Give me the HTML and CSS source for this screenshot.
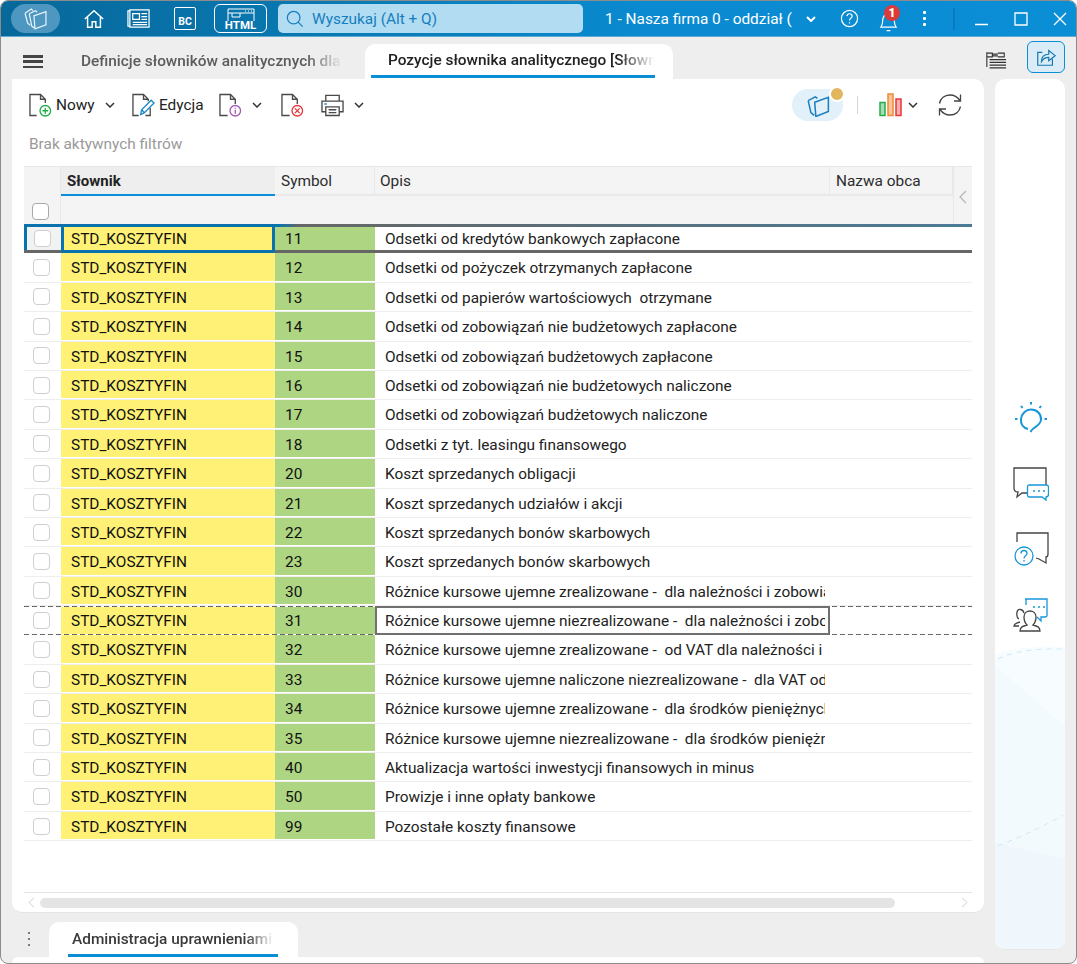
FILE: index.html
```html
<!DOCTYPE html>
<html lang="pl">
<head>
<meta charset="utf-8">
<title>Pozycje słownika analitycznego</title>
<link rel="stylesheet" href="styles.css">
</head>
<body>
<div class="window">
  <header class="titlebar">
    <div class="logo-pill">
      <svg class="ic-logo" viewBox="0 0 22 22"><path d="M9.500 8.500 21 4.500V17L10.500 21Z"/><path d="M5 6.500 11 3.500 12.500 5M5 6.500 7.500 18.500 10 20"/><path d="M1 6 7 2 8.500 3.500M1 6 3.500 15.500 6 17.500"/></svg>
    </div>
    <svg class="ic-home" viewBox="0 0 24 24"><path d="M2 12 12 3 22 12M5 10V21H10V15H14V21H19V10"/></svg>
    <svg class="ic-news" viewBox="0 0 24 24"><path d="M1 4H3V20H1ZM3 3H23V21H3Z"/><path d="M6 7H13V13H6ZM15 7H21M15 10H21M15 13H21M6 16H21M6 18.500H21"/></svg>
    <div class="bc-box"><span class="bc-text">BC</span></div>
    <div class="html-box">
      <svg class="ic-html" viewBox="0 0 30 14"><path d="M2 13V1H28V13M2 5H28M6 5V9H14V5M19 3H20M22 3H23M25 3H26"/></svg>
      <span class="html-text">HTML</span>
    </div>
    <div class="search">
      <svg class="ic-search" viewBox="0 0 20 20"><circle cx="8.500" cy="8.500" r="7"/><path d="M13.500 13.500 18.500 18.500"/></svg>
      <span>Wyszukaj (Alt + Q)</span>
    </div>
    <span class="company">1 - Nasza firma 0 - oddział (</span>
    <svg class="ic-chev-white" viewBox="0 0 10 6"><path d="M1 1 5 5 9 1"/></svg>
    <svg class="ic-help" viewBox="0 0 20 20"><circle cx="10" cy="10" r="8.500"/><path d="M7.300 7.500C7.500 5.800 8.700 5 10 5 11.700 5 12.800 6.100 12.800 7.500 12.800 9.500 10 9.500 10 12"/><path d="M10 14V15.200"/></svg>
    <div class="bell-wrap">
      <svg class="ic-bell" viewBox="0 0 20 24"><path d="M2 18C3.500 16 4 14 4 10 4 7 6.500 4 10 4S16 7 16 10C16 14 16.500 16 18 18ZM8 21.500H12"/></svg>
      <span class="badge">1</span>
    </div>
    <div class="kebab light"><i></i><i></i><i></i></div>
    <span class="tb-sep"></span>
    <svg class="ic-win" viewBox="0 0 14 14"><path d="M0 12.500H13"/></svg>
    <svg class="ic-win win-gap" viewBox="0 0 14 14"><path d="M1 1H13V13H1Z"/></svg>
    <svg class="ic-win win-gap" viewBox="0 0 14 14"><path d="M1 1 13 13M13 1 1 13"/></svg>
  </header>

  <nav class="tabbar">
    <div class="hamburger"><i></i><i></i><i></i></div>
    <div class="tab tab-inactive"><span class="tab-label fade">Definicje słowników analitycznych dla</span></div>
    <div class="tab tab-active"><span class="tab-label fade">Pozycje słownika analitycznego [Słown</span></div>
    <svg class="ic-tree" viewBox="0 0 24 20"><path d="M2 1V17M2 2H8V6H2M8 3H14M8 5H14M14 2H21V6H14M5 9H23M5 12H23M5 15H23M5 18H23"/></svg>
    <div class="share-btn">
      <svg class="ic-share" viewBox="0 0 24 24"><path d="M19 14V21H3V7H8"/><path d="M7 17C7 11 11 9 15 9V5L22 10.500 15 16V12.500C12 12.500 9 13.500 7 17Z"/></svg>
    </div>
  </nav>

  <div class="workspace">
    <div class="content">
      <main class="card">
        <div class="toolbar">
          <svg class="ic-doc" viewBox="0 0 24 24"><path class="d" d="M8 23H1V1H12L17 6V10M12 1V6H17"/><circle class="g" cx="17" cy="18" r="5.500"/><path class="g" d="M17 15V21M14 18H20"/></svg>
          <span class="tool-label lb-new">Nowy</span>
          <svg class="ic-chev chev-new" viewBox="0 0 10 6"><path d="M1 1 5 5 9 1"/></svg>
          <svg class="ic-doc doc-edit" viewBox="0 0 24 24"><path class="d" d="M7 23H1V1H12L17 6V8M12 1V6H17M19 15V23H14"/><path class="b" d="M9 22 10 17 20 7 23 10 13 20Z M10 17 13 20"/></svg>
          <span class="tool-label lb-edit">Edycja</span>
          <svg class="ic-doc doc-info" viewBox="0 0 24 24"><path class="d" d="M9 23H1V1H12L17 6V11M12 1V6H17"/><circle class="p" cx="17" cy="18" r="5.500"/><path class="p" d="M17 17V21M17 14.800V15.800"/></svg>
          <svg class="ic-chev chev-info" viewBox="0 0 10 6"><path d="M1 1 5 5 9 1"/></svg>
          <svg class="ic-doc doc-del" viewBox="0 0 24 24"><path class="d" d="M9 23H1V1H12L17 6V11M12 1V6H17"/><circle class="r" cx="17" cy="18" r="5.500"/><path class="r" d="M14.500 15.500 19.500 20.500M19.500 15.500 14.500 20.500"/></svg>
          <svg class="ic-doc doc-print" viewBox="0 0 24 24"><path class="d" d="M5 8V2H19V8M5 19H1V8H23V19H19M5 14H19V23H5ZM8 17H16M8 20H16"/><path class="b" d="M3.500 11H6"/></svg>
          <svg class="ic-chev chev-print" viewBox="0 0 10 6"><path d="M1 1 5 5 9 1"/></svg>
          <div class="tool-spacer"></div>
          <div class="view-pill">
            <svg class="ic-view" viewBox="0 0 22 22"><path d="M8 8.500 20.500 4V17L9 21.500Z"/><path d="M2 7 8.500 3.500 10.500 5M2 7 4.500 18 7.500 20.500"/></svg>
            <span class="view-dot"></span>
          </div>
          <span class="tool-sep"></span>
          <svg class="ic-bars" viewBox="0 0 24 24"><rect class="bg" x="1" y="9.500" width="5" height="13"/><rect class="bo" x="9" y="1" width="5" height="21.500"/><rect class="br" x="17" y="6" width="5" height="16.500"/></svg>
          <svg class="ic-chev chev-bars" viewBox="0 0 10 6"><path d="M1 1 5 5 9 1"/></svg>
          <svg class="ic-refresh" viewBox="0 0 24 24"><path d="M1.500 10.500C2.500 5.500 6.500 2 12 2 16 2 19.500 4 22 7.500M22.500 1.500V8H16"/><path d="M22.500 13.500C21.500 18.500 17.500 22 12 22 8 22 4.500 20 2 16.500M1.500 22.500V16H8"/></svg>
        </div>
        <div class="filters">Brak aktywnych filtrów</div>

        <div class="grid">
          <div class="head">
            <div class="h-check"><span class="cb cb-head"></span></div>
            <div class="h-cell h-sort">Słownik</div>
            <div class="h-cell">Symbol</div>
            <div class="h-cell h-opis">Opis</div>
            <div class="h-cell h-obca">Nazwa obca</div>
            <div class="h-arrow"><svg class="ic-arrow" viewBox="0 0 8 14"><path d="M7 1 1 7 7 13"/></svg></div>
            <div class="h-filter"></div>
          </div>
          <div class="rows">
            <div class="row row-current"><div class="c-check"><span class="cb"></span></div><div class="c-dict c-focus">STD_KOSZTYFIN</div><div class="c-sym">11</div><div class="c-opis">Odsetki od kredytów bankowych zapłacone</div></div>
            <div class="row"><div class="c-check"><span class="cb"></span></div><div class="c-dict">STD_KOSZTYFIN</div><div class="c-sym">12</div><div class="c-opis">Odsetki od pożyczek otrzymanych zapłacone</div></div>
            <div class="row"><div class="c-check"><span class="cb"></span></div><div class="c-dict">STD_KOSZTYFIN</div><div class="c-sym">13</div><div class="c-opis">Odsetki od papierów wartościowych  otrzymane</div></div>
            <div class="row"><div class="c-check"><span class="cb"></span></div><div class="c-dict">STD_KOSZTYFIN</div><div class="c-sym">14</div><div class="c-opis">Odsetki od zobowiązań nie budżetowych zapłacone</div></div>
            <div class="row"><div class="c-check"><span class="cb"></span></div><div class="c-dict">STD_KOSZTYFIN</div><div class="c-sym">15</div><div class="c-opis">Odsetki od zobowiązań budżetowych zapłacone</div></div>
            <div class="row"><div class="c-check"><span class="cb"></span></div><div class="c-dict">STD_KOSZTYFIN</div><div class="c-sym">16</div><div class="c-opis">Odsetki od zobowiązań nie budżetowych naliczone</div></div>
            <div class="row"><div class="c-check"><span class="cb"></span></div><div class="c-dict">STD_KOSZTYFIN</div><div class="c-sym">17</div><div class="c-opis">Odsetki od zobowiązań budżetowych naliczone</div></div>
            <div class="row"><div class="c-check"><span class="cb"></span></div><div class="c-dict">STD_KOSZTYFIN</div><div class="c-sym">18</div><div class="c-opis">Odsetki z tyt. leasingu finansowego</div></div>
            <div class="row"><div class="c-check"><span class="cb"></span></div><div class="c-dict">STD_KOSZTYFIN</div><div class="c-sym">20</div><div class="c-opis">Koszt sprzedanych obligacji</div></div>
            <div class="row"><div class="c-check"><span class="cb"></span></div><div class="c-dict">STD_KOSZTYFIN</div><div class="c-sym">21</div><div class="c-opis">Koszt sprzedanych udziałów i akcji</div></div>
            <div class="row"><div class="c-check"><span class="cb"></span></div><div class="c-dict">STD_KOSZTYFIN</div><div class="c-sym">22</div><div class="c-opis">Koszt sprzedanych bonów skarbowych</div></div>
            <div class="row"><div class="c-check"><span class="cb"></span></div><div class="c-dict">STD_KOSZTYFIN</div><div class="c-sym">23</div><div class="c-opis">Koszt sprzedanych bonów skarbowych</div></div>
            <div class="row"><div class="c-check"><span class="cb"></span></div><div class="c-dict">STD_KOSZTYFIN</div><div class="c-sym">30</div><div class="c-opis">Różnice kursowe ujemne zrealizowane -  dla należności i zobowiązań</div></div>
            <div class="row row-dashed"><div class="c-check"><span class="cb"></span></div><div class="c-dict">STD_KOSZTYFIN</div><div class="c-sym">31</div><div class="c-opis c-outline">Różnice kursowe ujemne niezrealizowane -  dla należności i zobowiązań</div></div>
            <div class="row"><div class="c-check"><span class="cb"></span></div><div class="c-dict">STD_KOSZTYFIN</div><div class="c-sym">32</div><div class="c-opis">Różnice kursowe ujemne zrealizowane -  od VAT dla należności i zobowiązań</div></div>
            <div class="row"><div class="c-check"><span class="cb"></span></div><div class="c-dict">STD_KOSZTYFIN</div><div class="c-sym">33</div><div class="c-opis">Różnice kursowe ujemne naliczone niezrealizowane -  dla VAT od należności</div></div>
            <div class="row"><div class="c-check"><span class="cb"></span></div><div class="c-dict">STD_KOSZTYFIN</div><div class="c-sym">34</div><div class="c-opis">Różnice kursowe ujemne zrealizowane -  dla środków pieniężnych</div></div>
            <div class="row"><div class="c-check"><span class="cb"></span></div><div class="c-dict">STD_KOSZTYFIN</div><div class="c-sym">35</div><div class="c-opis">Różnice kursowe ujemne niezrealizowane -  dla środków pieniężnych</div></div>
            <div class="row"><div class="c-check"><span class="cb"></span></div><div class="c-dict">STD_KOSZTYFIN</div><div class="c-sym">40</div><div class="c-opis">Aktualizacja wartości inwestycji finansowych in minus</div></div>
            <div class="row"><div class="c-check"><span class="cb"></span></div><div class="c-dict">STD_KOSZTYFIN</div><div class="c-sym">50</div><div class="c-opis">Prowizje i inne opłaty bankowe</div></div>
            <div class="row"><div class="c-check"><span class="cb"></span></div><div class="c-dict">STD_KOSZTYFIN</div><div class="c-sym">99</div><div class="c-opis">Pozostałe koszty finansowe</div></div>
          </div>
          <div class="hscroll">
            <svg class="ic-sarrow" viewBox="0 0 8 14"><path d="M7 1 1 7 7 13"/></svg>
            <div class="thumb"></div>
            <svg class="ic-sarrow" viewBox="0 0 8 14"><path d="M1 1 7 7 1 13"/></svg>
          </div>
        </div>
      </main>
      <div class="bottom-tabs">
        <div class="kebab dark"><i></i><i></i><i></i></div>
        <div class="bottom-tab"><span class="tab-label fade">Administracja uprawnieniami</span></div>
      </div>
      <div class="lower-card"></div>
    </div>

    <aside class="sidebar">
      <svg class="ic-side" viewBox="0 0 36 36"><g class="blue"><path d="M15 29C10 28 7.500 24 8 19 8.500 13.500 13 9.500 18 9.500 24 9.500 28.500 14 28 20 27.500 24 24 26 21 28 19.500 29 18.500 30 17.500 32"/><path d="M18 2V4.500M8 6 9.500 8M28 6 26.500 8M2 19H4.500M31.500 19H34"/></g></svg>
      <svg class="ic-side" viewBox="0 0 36 36"><path class="dk" d="M33 20V3H1V23C1 26 2 27 5 27L4 32 9 28H14"/><path class="blue-s" d="M16 20H33C35 20 35.500 21 35.500 22V29C35.500 31 35 32 33 32V35L29 32H16C15 32 14.500 31 14.500 30V22C14.500 21 15 20 16 20ZM20 26H22M25 26H27M30 26H32"/></svg>
      <svg class="ic-side" viewBox="0 0 36 36"><path class="dk" d="M4 12V3H35V24C35 26 34 27 33 27V33L26 29 23 28"/><circle class="blue-s" cx="11" cy="26" r="9"/><path class="blue-s" d="M8 23.500C8 21.500 9.500 20.500 11 20.500 13 20.500 14 22 14 23.500 14 25.500 11 25.500 11 28.500M11 30V31.500"/></svg>
      <svg class="ic-side ic-people" viewBox="0 0 36 36"><path class="blue-s" d="M12 3H34V19C34 20 33 21 32 21H28V25L24 21M13 9V3M20 11H22M25 11H27M30 11H32"/><path class="dk" d="M7 26C3 27 1 28 1 30H6M11 17C10 13 5 12 4 16 3.500 19 4 22 6 23"/><path class="dk" d="M7 35C7 31 10 30 14 29 12 27 11 24 11 21 11 17 14 15 17 15S23 17 23 21C23 24 22 27 20 29 24 30 27 31 27 35Z"/></svg>
      <svg class="side-wave" viewBox="0 0 70 300" preserveAspectRatio="none">
        <path class="w1" d="M0 10C15 3 40 0 70 2V300H0Z"/>
        <path class="w2" d="M0 22C20 35 45 60 70 80V300H0Z"/>
        <path class="w3" d="M0 195 70 212V300H0Z"/>
        <path class="dash" d="M3 14C15 7 40 3 68 4"/>
        <path class="dash" d="M3 198C25 190 50 178 68 168"/>
      </svg>
    </aside>
  </div>
</div>
</body>
</html>
```

FILE: styles.css
```css
* { box-sizing: border-box; }
html, body { margin: 0; padding: 0; background: #fff; }
body { font-family: Roboto, "Liberation Sans", sans-serif; color: #222; width: 1077px; height: 964px; overflow: hidden; }
svg { display: block; flex: none; fill: none; }

.window { width: 1077px; height: 964px; background: #eee; border: 1px solid #8c8c8c; border-radius: 8px; display: flex; flex-direction: column; overflow: hidden; }

/* title bar */
.titlebar { height: 36px; flex: none; display: flex; align-items: center; padding-left: 10px; background: linear-gradient(90deg, #07689a 0, #0a7fbb 40%, #0a8ad0 60%, #0a8ed6 100%); border-bottom: 1px solid #5fa9d3; }
.titlebar svg { stroke: #fff; }
.logo-pill { width: 49px; height: 29px; border-radius: 15px; background: #4e97c1; display: flex; align-items: center; justify-content: center; }
.ic-logo { width: 23px; height: 23px; stroke-width: 1.200; }
.titlebar .ic-logo { stroke: #e4f2fa; }
.ic-home { width: 22px; height: 22px; margin-left: 23px; stroke-width: 1.600; }
.ic-news { width: 23px; height: 23px; margin-left: 22px; stroke-width: 1.300; }
.bc-box { width: 22px; height: 23px; margin-left: 24px; border: 1.500px solid #fff; border-radius: 2px; display: flex; align-items: flex-end; justify-content: center; }
.bc-text { font-size: 10.500px; font-weight: 700; color: #fff; line-height: 15px; }
.html-box { width: 53px; height: 29px; margin-left: 18px; border: 1.500px solid #fff; border-radius: 6px; position: relative; display: flex; flex-direction: column; align-items: center; }
.ic-html { width: 30px; height: 14px; margin-top: 3px; stroke-width: 1; }
.html-text { font-size: 11.500px; font-weight: 700; color: #fff; line-height: 10px; margin-top: -2px; }
.search { width: 305px; height: 29px; margin-left: 11px; background: #b2dcf2; border-radius: 5px; display: flex; align-items: center; padding-left: 8px; gap: 8px; font-size: 15.400px; color: #157fbd; }
.titlebar .ic-search { width: 18px; height: 18px; stroke: #157fbd; stroke-width: 1.400; }
.company { width: 187px; margin-left: 22px; color: #fff; font-size: 15.400px; white-space: nowrap; overflow: hidden; }
.ic-chev-white { width: 10px; height: 6px; margin-left: 14px; stroke-width: 2; }
.ic-help { width: 19px; height: 19px; margin-left: 24px; stroke-width: 1.300; }
.bell-wrap { width: 22px; height: 28px; margin-left: 19px; position: relative; }
.ic-bell { width: 19px; height: 23px; margin: 5px 0 0 1px; stroke-width: 1.300; }
.badge { position: absolute; left: 6px; top: 0; width: 16px; height: 16px; border-radius: 50%; background: #d93a3a; color: #fff; font-size: 12px; font-weight: 900; line-height: 16px; text-align: center; }
.kebab { display: flex; flex-direction: column; gap: 3px; width: 3px; }
.kebab i { display: block; width: 3px; height: 3px; background: #fff; border-radius: 1px; }
.kebab.light { margin-left: 23px; }
.kebab.dark { margin-left: 16px; gap: 4px; flex: none; }
.kebab.dark i { background: #555; width: 2px; height: 2px; }
.tb-sep { width: 2px; height: 22px; margin-left: 27px; background: rgba(0,70,120,.25); }
.ic-win { width: 14px; height: 14px; margin-left: 20px; stroke-width: 1.300; }
.win-gap { margin-left: 25px; }

/* tab bar */
.tabbar { height: 42px; flex: none; display: flex; align-items: flex-end; padding-left: 22px; position: relative; }
.hamburger { width: 20px; height: 13px; margin-bottom: 11px; display: flex; flex-direction: column; justify-content: space-between; flex: none; }
.hamburger i { display: block; height: 2.500px; background: #444; }
.tab { flex: none; font-size: 15.400px; font-weight: 500; white-space: nowrap; }
.tab-label { display: block; overflow: hidden; }
.fade { -webkit-mask-image: linear-gradient(90deg, #000 86%, transparent 100%); mask-image: linear-gradient(90deg, #000 86%, transparent 100%); }
.tab-inactive { width: 262px; margin-left: 38px; margin-bottom: 9px; color: #5c5c5c; }
.tab-active { width: 308px; height: 35px; margin-left: 22px; background: #fff; border-radius: 10px 10px 0 0; padding: 7px 18px 0 23px; color: #222; position: relative; }
.tab-active::after { content: ""; position: absolute; left: 6px; right: 18px; bottom: 1px; height: 3px; background: #0a8ed6; }
.ic-tree { width: 22px; height: 19px; margin-left: 312px; margin-bottom: 9px; stroke: #333; stroke-width: 1.200; }
.share-btn { width: 38px; height: 32px; margin-left: 20px; margin-bottom: 6px; border: 1px solid #0a8ed6; border-radius: 6px; background: #d9ecf7; display: flex; align-items: center; justify-content: center; flex: none; }
.ic-share { width: 22px; height: 22px; stroke: #1577ad; stroke-width: 1.300; }

/* workspace */
.workspace { flex: 1; min-height: 0; display: flex; padding-left: 11px; }
.content { width: 972px; display: flex; flex-direction: column; flex: none; }
.card { height: 834px; flex: none; background: #fff; border-radius: 0 10px 10px 10px; border-bottom: 1px solid #e4e4e4; display: flex; flex-direction: column; padding-left: 12px; }

.toolbar { height: 51px; flex: none; display: flex; align-items: center; padding: 0 22px 0 5px; }
.toolbar .ic-doc { width: 23px; height: 24px; stroke-width: 1.400; }
.d { stroke: #4a4a4a; }
.g { stroke: #22ad4a; }
.b { stroke: #1a87c9; }
.p { stroke: #a55ab5; }
.r { stroke: #e5383b; }
.tool-label { font-size: 15.400px; color: #222; }
.lb-new { margin-left: 4px; width: 38px; }
.lb-edit { margin-left: 4px; width: 46px; }
.ic-chev { width: 10px; height: 6px; stroke: #333; stroke-width: 1.500; }
.chev-new { margin-left: 11px; }
.toolbar .doc-edit { margin-left: 17px; }
.toolbar .doc-info { margin-left: 14px; }
.chev-info { margin-left: 10px; }
.toolbar .doc-del { margin-left: 19px; }
.toolbar .doc-print { margin-left: 17px; }
.chev-print { margin-left: 10px; }
.tool-spacer { flex: 1; }
.view-pill { width: 51px; height: 32px; border-radius: 16px; background: #e1f0f9; position: relative; display: flex; align-items: center; padding-left: 14px; }
.ic-view { width: 24px; height: 24px; stroke: #1a7fbf; stroke-width: 1.400; }
.view-dot { position: absolute; right: -2px; top: -3px; width: 16px; height: 16px; border-radius: 50%; background: #e2b55f; border: 2.500px solid #fff; }
.tool-sep { width: 1px; height: 18px; margin-left: 14px; background: #d6d6d6; }
.ic-bars { width: 24px; height: 24px; margin-left: 21px; stroke-width: 1.500; }
.bg { stroke: #22ad4a; fill: #a6dfb7; }
.bo { stroke: #f08a35; fill: #fbc59a; }
.br { stroke: #e5383b; fill: #f8aeb0; }
.chev-bars { margin-left: 5px; }
.ic-refresh { width: 24px; height: 24px; margin-left: 20px; stroke: #444; stroke-width: 1.300; }
.filters { height: 36px; flex: none; padding: 5px 0 0 5px; font-size: 15.400px; line-height: 18px; color: #999; }

/* grid */
.grid { width: 948px; flex: 1; min-height: 0; display: flex; flex-direction: column; }
.head { height: 58px; flex: none; display: grid; grid-template-columns: 37px 214px 100px 455px 123px 19px; grid-template-rows: 29px 29px; background: #f4f4f4; border-top: 1px solid #e6e6e6; }
.h-check { grid-row: 1 / 3; grid-column: 1; display: flex; justify-content: center; align-items: flex-end; padding-bottom: 5px; padding-right: 3px; border-right: 1px solid #e8e8e8; }
.h-cell { font-size: 15.400px; font-weight: 400; color: #2c2c2c; padding: 1px 0 0 6px; line-height: 27px; border-bottom: 2px solid #e9e9e9; border-right: 1px solid #e9e9e9; }
.h-sort { background: #eee; border-bottom-color: #0a8ed6; color: #222; font-size: 15px; font-weight: 700; border-right: 0; }
.h-opis { padding-left: 5px; }
.h-arrow { grid-column: 6; grid-row: 1 / 3; display: flex; align-items: center; justify-content: center; border-left: 1px solid #e9e9e9; }
.ic-arrow { width: 8px; height: 14px; stroke: #b5b5b5; stroke-width: 1.200; margin-top: 1px; }
.h-filter { grid-column: 2 / 6; grid-row: 2; }

.rows { height: 669px; flex: none; display: flex; flex-direction: column; border-bottom: 1px solid #e4e4e4; }
.row { height: 29.400px; flex: none; display: grid; grid-template-columns: 37px 214px 100px 455px 142px; grid-template-rows: minmax(0, 1fr); border-bottom: 1px solid #eee; position: relative; font-size: 15.400px; line-height: 28px; white-space: pre; }
.c-check { display: flex; align-items: center; justify-content: center; padding-right: 3px; }
.cb { display: block; width: 17px; height: 17px; border: 1px solid #cfcfcf; border-radius: 4px; background: #fff; }
.cb-head { border-color: #a9a9a9; }
.c-dict { background: #fff176; padding: 1px 0 0 10px; color: #111; border-bottom: 1px solid #fff; }
.c-sym { background: #aed581; padding: 1px 0 0 10px; color: #111; border-bottom: 1px solid #fff; }
.c-opis { padding: 1px 0 0 10px; overflow: hidden; color: #222; clip-path: inset(0 5px 0 0); }

.row-current { border-top: 3px solid #666; border-bottom: 3px solid #666; line-height: 24px; }
.row-current .c-check { background: #f2f2f2; border-left: 3px solid #0a73ad; }
.row-current .c-dict, .row-current .c-sym { border-bottom: 0; padding-top: 0; }
.row-current .c-opis { padding-top: 0; }
.row-current .c-focus { border: 3px solid #0a73ad; padding-left: 7px; line-height: 24px; margin: -3px 0; }
.row-current::before { content: ""; position: absolute; left: 0; right: 0; top: -3px; height: 3px; background: linear-gradient(90deg, #0a73ad 0, #0a73ad 27%, #666 29%, #4b7b96 100%); }

.row-dashed { border-bottom: 0; background-image: linear-gradient(90deg, #666 60%, transparent 60%), linear-gradient(90deg, #666 60%, transparent 60%); background-size: 8px 1px; background-repeat: repeat-x; background-position: 0 0, 0 100%; }
.row-dashed .c-dict, .row-dashed .c-sym { border-bottom: 0; margin: 1px 0; padding-top: 0; }
.row-dashed .c-check { margin: 1px 0; }
.c-outline { background: #fff; clip-path: none; border-right: 5px solid #fff; outline: 2px solid #707070; outline-offset: -2px; }

.hscroll { flex: 1; display: flex; align-items: center; padding: 0 4px; gap: 5px; }
.ic-sarrow { width: 7px; height: 11px; stroke: #dcdcdc; stroke-width: 1.300; }
.thumb { width: 856px; height: 10px; border-radius: 5px; background: #e4e4e4; margin-right: 61px; }

/* bottom */
.bottom-tabs { height: 44px; flex: none; display: flex; align-items: flex-start; position: relative; z-index: 1; }
.bottom-tabs .kebab { margin-top: 19px; }
.bottom-tab { width: 249px; height: 42px; margin: 9px 0 0 18px; background: #fff; border-radius: 10px 10px 0 0; padding: 8px 24px 0 23px; font-size: 15.400px; font-weight: 500; color: #3a3a3a; white-space: nowrap; position: relative; }
.bottom-tab::after { content: ""; position: absolute; left: 19px; right: 20px; top: 32px; height: 3px; background: #0a8ed6; }
.bottom-tab .tab-label { line-height: 18px; }
.lower-card { flex: 1; background: #fff; border-radius: 8px 8px 0 0; }

/* sidebar */
.sidebar { width: 70px; height: 871px; margin-left: 11px; background: #fff; border-radius: 10px; border-bottom: 1px solid #e6e6e6; flex: none; position: relative; overflow: hidden; display: flex; flex-direction: column; align-items: center; padding: 321px 0 0 2px; gap: 29px; }
.ic-side { width: 36px; height: 36px; }
.ic-people { margin-top: 1px; }
.blue { stroke: #1796d9; stroke-width: 2; }
.blue-s { stroke: #1796d9; stroke-width: 1.300; fill: #fff; }
.dk { stroke: #444; stroke-width: 1.300; fill: #fff; }
.side-wave { position: absolute; left: 0; right: 0; bottom: 0; width: 70px; height: 304px; }
.w1 { fill: #f7fcff; }
.w2 { fill: #f3fafd; }
.w3 { fill: #eff6fc; }
.dash { stroke: #cfe9f8; stroke-width: 1; stroke-dasharray: 5 5; }
```
